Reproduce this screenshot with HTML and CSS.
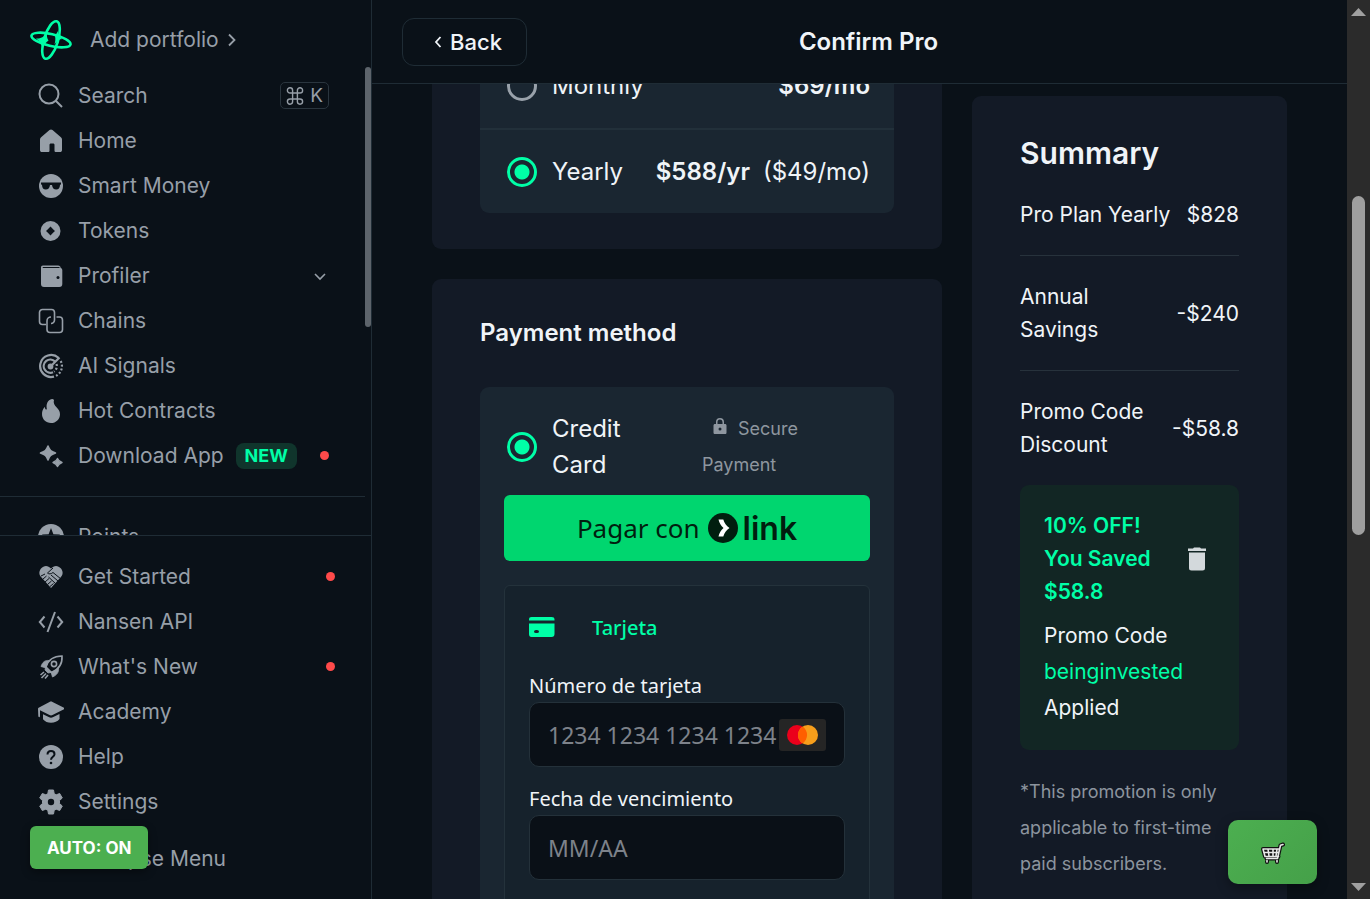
FILE: index.html
```
<!DOCTYPE html>
<html lang="en">
<head>
<meta charset="utf-8">
<title>Confirm Pro</title>
<link rel="stylesheet" href="styles.css">
</head>
<body>
<div class="app">
  <aside class="sidebar">
    <a class="brand" href="#">
      <svg class="brand-logo" viewBox="0 0 42 42" fill="none" stroke="currentColor" stroke-width="2.6">
        <ellipse cx="21" cy="21" rx="7" ry="19.500" transform="rotate(17 21 21)"/>
        <ellipse cx="21" cy="21" rx="20" ry="6" transform="rotate(13 21 21)"/>
        <path d="M6 19.500c4 .3 8-1 11-5.500-.3 3 0 5 1.500 7.500-3 2-5 5-6 9.500 0-5-2-8.500-6.500-11.500z" fill="currentColor" stroke="none"/>
        <path d="M25 17l3-5c-.3 4 .8 6 4.500 8-3 0-6 2-8 5.500.8-3 1.200-5.500.5-8.500z" fill="currentColor" stroke="none"/>
      </svg>
      <span>Add portfolio</span>
      <svg class="brand-chevron" viewBox="0 0 10 16" fill="none" stroke="currentColor" stroke-width="1.800"><path d="M2 2.500l5.500 5.500L2 13.500"/></svg>
    </a>
    <div class="menu">
      <nav class="menu-list">
        <a class="item" href="#">
          <svg class="icon" viewBox="0 0 26 26" fill="none" stroke="currentColor" stroke-width="2"><circle cx="11" cy="11" r="9.500"/><path d="M17.500 17.500l6.500 6.500"/></svg>
          <span>Search</span>
          <kbd class="shortcut"><svg viewBox="0 0 18 18" fill="none" stroke="currentColor" stroke-width="1.400"><path d="M6 6H4a2.600 2.600 0 1 1 2.600-2.600V14.600A2.600 2.600 0 1 1 4 12H14a2.600 2.600 0 1 1-2.600 2.600V3.400A2.600 2.600 0 1 1 14 6z"/></svg>K</kbd>
        </a>
        <a class="item" href="#">
          <svg class="icon" viewBox="0 0 26 26" fill="currentColor"><path d="M2 11.500c0-1 .4-1.700 1.100-2.300L11.500 2c.9-.8 2.100-.8 3 0l8.400 7.200c.7.600 1.100 1.300 1.100 2.300V22c0 1.400-.8 2-2 2h-4c-1 0-1.500-.500-1.500-1.500V17c0-1-.5-1.500-1.500-1.500h-2c-1 0-1.500.5-1.500 1.500v5.500c0 1-.5 1.500-1.500 1.500H4c-1.200 0-2-.6-2-2z"/></svg>
          <span>Home</span>
        </a>
        <a class="item" href="#">
          <svg class="icon" viewBox="0 0 26 26"><circle cx="13" cy="13" r="12" fill="currentColor"/><path class="cut-fill" d="M3 9.500h20v1.800l-1 .6c-.2 3-1.500 4.600-3.800 4.600-2.400 0-3.800-1.700-4.200-4.600h-2c-.4 2.900-1.800 4.600-4.200 4.600S4.200 14.900 4 11.900l-1-.6z"/></svg>
          <span>Smart Money</span>
        </a>
        <a class="item" href="#">
          <svg class="icon" viewBox="0 0 26 26"><circle cx="12.500" cy="13" r="10" fill="currentColor"/><path class="cut-fill" d="M12.500 8.500c1 1.300 3.200 3.500 4.500 4.500-1.300 1-3.500 3.200-4.500 4.500-1-1.300-3.200-3.500-4.500-4.500 1.300-1 3.500-3.200 4.500-4.500z"/></svg>
          <span>Tokens</span>
        </a>
        <a class="item" href="#">
          <svg class="icon" viewBox="0 0 26 26"><path d="M5 2.500h15c1.800 0 2.700 1 2.700 2.500 1 .3 1.600 1 1.600 2.200V21c0 2-1 3-3 3H6c-2 0-3-1-3-3V4.800c0-1.500.6-2.300 2-2.300z" fill="currentColor"/><path class="cut-fill" d="M4.500 3.900h16c.8 0 1.200.4 1.200 1H5z"/><circle class="cut-fill" cx="20" cy="14.500" r="1.500"/></svg>
          <span>Profiler</span>
          <svg class="item-chevron" viewBox="0 0 16 16" fill="none" stroke="currentColor" stroke-width="1.600"><path d="M2 6l5 5 5-5"/></svg>
        </a>
        <a class="item" href="#">
          <svg class="icon" viewBox="0 0 26 26" fill="none" stroke="currentColor" stroke-width="1.600"><path d="M8 16.500H4.500a3 3 0 0 1-3-3v-9a3 3 0 0 1 3-3h9a3 3 0 0 1 3 3v7.500a3.500 3.500 0 0 1-3.500 3.500"/><path d="M18.500 9h3a3 3 0 0 1 3 3v9.500a3 3 0 0 1-3 3H12a3 3 0 0 1-3-3V13a4 4 0 0 1 4-4"/></svg>
          <span>Chains</span>
        </a>
        <a class="item" href="#">
          <svg class="icon" viewBox="0 0 26 26" fill="none" stroke="currentColor" stroke-width="2.200"><path d="M20.500 4.800A11 11 0 1 0 16 23.600M17 8.500A6.600 6.600 0 1 0 15 19.200M21.500 4.500l-8.500 8.500"/><circle cx="12.500" cy="13.500" r="1.800" fill="currentColor"/><path d="M22.700 8a11 11 0 0 1-5 15M18.500 11a6.500 6.500 0 0 1-2.500 7.500" stroke-dasharray="2 1.800"/></svg>
          <span>AI Signals</span>
        </a>
        <a class="item" href="#">
          <svg class="icon" viewBox="0 0 26 26" fill="currentColor"><path d="M14 1c-4.500 1.200-6 5-5.200 9.700.1 1-.9 1.200-1.400.3-.4-.7-.6-1.400-.6-2.200C4.800 11 4 13.400 4 16c0 5.200 4 9 9 9s9-3.700 9-8.800c0-3.200-1.700-5-3.500-7C16.600 7.200 15 5 16 2c-.5-.6-1.200-1.100-2-1z"/></svg>
          <span>Hot Contracts</span>
        </a>
        <a class="item" href="#">
          <svg class="icon" viewBox="0 0 26 26" fill="currentColor" stroke="currentColor" stroke-linejoin="round"><path d="M10 3c1.800 4.500 2.700 5.300 7.500 7-4.800 1.700-5.700 2.500-7.500 7-1.800-4.500-2.700-5.300-7.500-7C7.300 8.300 8.200 7.500 10 3z" stroke-width="1.600"/><path d="M19.500 15.500c1 2.500 1.500 3 4.500 4-3 1-3.500 1.500-4.500 4-1-2.500-1.500-3-4.500-4 3-1 3.500-1.500 4.500-4z" stroke-width="1.400"/></svg>
          <span>Download App</span>
          <span class="tag">NEW</span>
          <i class="dot"></i>
        </a>
        <hr class="rule">
        <a class="item" href="#">
          <svg class="icon" viewBox="0 0 26 26"><circle cx="13" cy="13" r="13" fill="currentColor"/><path class="cut-fill" d="M13 4l2.400 6.200 6.600.4-5 4.200 1.600 6.400-5.600-3.500-5.600 3.500L9 14.800l-5-4.200 6.600-.4z"/></svg>
          <span>Points</span>
        </a>
      </nav>
      <div class="menu-track"><div class="menu-thumb"></div></div>
    </div>
    <nav class="menu-bottom">
      <a class="item" href="#">
        <svg class="icon" viewBox="0 0 26 26"><path d="M13 4.500c3-3.500 7-3.500 10 0 2.500 3.300 2 6.500-.5 9L13 24l-9.500-10.500C1 11 .5 7.800 3 4.500c3-3.500 7-3.500 10 0z" fill="currentColor"/><path class="cut-line" d="M15 4l-5.500 5c1.500 1.500 3.500 1 5.500-.5l8 6.500M13 11l7 6M10.500 13l7 6.500M3 12l4-2M4.500 15.500l4-3.500M7 18l4-3.500M9.500 20.500l4-3.500M12 22.500l3.500-3"/></svg>
        <span>Get Started</span><i class="dot"></i>
      </a>
      <a class="item" href="#">
        <svg class="icon" viewBox="0 0 26 26" fill="none" stroke="currentColor" stroke-width="2"><path d="M6.500 7.500L1.800 13l4.700 5.500M19.500 7.500l4.700 5.500-4.700 5.500M17 3L9.500 23"/></svg>
        <span>Nansen API</span>
      </a>
      <a class="item" href="#">
        <svg class="icon" viewBox="0 0 26 26" fill="none" stroke="currentColor" stroke-width="1.600"><path d="M8 13c2-6.500 6.500-11 16-11 .6 8-3.500 13.500-10.500 16.500z"/><circle cx="16" cy="10" r="2.600"/><path d="M8.500 11.500L11 6.500C7 6 4.500 8 3 12.500l5 1.500zM14.500 18l6-4c.5 4-1.500 7-6 9l-1.500-5zM7.500 13.500l5.500 5-3 .5-3-3z" fill="currentColor" stroke-width=".8"/><path d="M6 18l-3.500 3M8 19.500l-4.500 4.500M10 21l-3 3.500"/></svg>
        <span>What's New</span><i class="dot"></i>
      </a>
      <a class="item" href="#">
        <svg class="icon" viewBox="0 0 26 26" fill="currentColor"><path d="M13 2.500c.6 0 1 .1 1.500.4L26 8.700c.8.400.8 1.200 0 1.600l-11.500 5.800c-1 .5-2 .5-3 0L2 11.300V17c0 .8-.3 1.200-.8 1.200S.3 17.800.3 17L0 9.700c0-.5.200-.8.600-1l10.900-5.800c.5-.3.900-.4 1.500-.4z"/><path d="M5 15.200l5.700 2.900c1.600.8 3 .8 4.600 0l6.200-3.100v5c-2 2.600-5 3.800-8.500 3.800-3.200 0-6-1.200-8-3.600z"/></svg>
        <span>Academy</span>
      </a>
      <a class="item" href="#">
        <svg class="icon" viewBox="0 0 26 26"><circle cx="13" cy="13" r="12" fill="currentColor"/><path class="cut-line wide" d="M9.500 10.500c0-2.200 1.500-3.500 3.500-3.500s3.500 1.300 3.500 3.200c0 2.600-3.500 2.600-3.500 5.600"/><circle class="cut-fill" cx="13" cy="19" r="1.300"/></svg>
        <span>Help</span>
      </a>
      <a class="item" href="#">
        <svg class="icon" viewBox="0 0 26 26"><path fill="currentColor" stroke="currentColor" stroke-linejoin="round" d="M10.500 1h5l.7 3.700 2 1.100 3.500-1.300L24.300 9l-2.800 2.500v3l2.800 2.500-2.600 4.500-3.500-1.300-2 1.100-.7 3.700h-5l-.7-3.700-2-1.100-3.500 1.300L1.700 17l2.800-2.500v-3L1.700 9l2.600-4.500 3.500 1.300 2-1.100z"/><circle class="cut-fill" cx="13" cy="13" r="3.200"/></svg>
        <span>Settings</span>
      </a>
      <button class="item collapse" type="button">
        <svg class="icon" viewBox="0 0 26 26" fill="none" stroke="currentColor" stroke-width="2"><path d="M13 6l-7 7 7 7M20 6l-7 7 7 7"/></svg>
        <span>Collapse Menu</span>
      </button>
    </nav>
    <button class="auto" type="button">AUTO: ON</button>
  </aside>

  <main class="main">
    <header class="topbar">
      <button class="back" type="button"><svg viewBox="0 0 8 12" fill="none" stroke="currentColor" stroke-width="1.800"><path d="M6.500 1L2 6l4.500 5"/></svg>Back</button>
      <h1 class="title">Confirm Pro</h1>
    </header>
    <div class="content">
      <div class="column">
        <section class="card plan">
          <div class="options">
            <label class="option"><input class="radio" type="radio" name="plan"><span>Monthly</span><span class="price"><b>$69/mo</b></span></label>
            <label class="option"><input class="radio" type="radio" name="plan" checked><span>Yearly</span><span class="price"><b>$588/yr</b><span>($49/mo)</span></span></label>
          </div>
        </section>
        <section class="card payment">
          <h2 class="card-title">Payment method</h2>
          <div class="method">
            <label class="method-head">
              <input class="radio" type="radio" name="method" checked>
              <span class="method-name">Credit Card</span>
              <span class="secure"><svg viewBox="0 0 14 18" fill="currentColor"><path d="M3 7V5a4 4 0 0 1 8 0v2h1c1 0 1.500.6 1.500 1.500v7c0 1-.5 1.500-1.500 1.500H2c-1 0-1.500-.5-1.500-1.500v-7C.5 7.600 1 7 2 7zm1.500 0h5V5a2.500 2.500 0 0 0-5 0zM7 10.500a1.500 1.500 0 1 0 0 3 1.500 1.500 0 0 0 0-3z" fill-rule="evenodd"/></svg>Secure Payment</span>
            </label>
            <button class="link-pay" type="button">
              <span>Pagar con</span>
              <svg viewBox="0 0 30 30"><circle cx="15" cy="15" r="15" fill="#011e0f"/><path d="M10.500 6.500h4.800c1 3.500 3 6.300 6.200 8.500-3.200 2.200-5.200 5-6.200 8.500h-4.800c.8-3.500 2.500-6.200 5-8.500-2.500-2.300-4.200-5-5-8.500z" fill="#fff"/></svg>
              <strong>link</strong>
            </button>
            <div class="card-form">
              <div class="tab">
                <svg viewBox="0 0 26 20" fill="currentColor"><path d="M2.500 0h20c2 0 3 .8 3 2.500v1H0v-1C0 .8.800 0 2.500 0zM0 6.500h25.500V17c0 2-1 3-3 3h-20C.8 20 0 19 0 17zm7 6.500a2 1.500 0 1 0 0 3h1a2 1.500 0 1 0 0-3z"/></svg>
                <span>Tarjeta</span>
              </div>
              <div class="field">
                <label for="number">Número de tarjeta</label>
                <div class="box">
                  <input id="number" type="text" placeholder="1234 1234 1234 1234">
                  <svg viewBox="0 0 47 32"><rect width="47" height="32" rx="3" fill="#252525"/><circle cx="18" cy="16" r="10" fill="#eb001b"/><circle cx="29" cy="16" r="10" fill="#f79e1b"/><path d="M23.500 7.600a10 10 0 0 1 0 16.800 10 10 0 0 1 0-16.800z" fill="#ff5f00"/></svg>
                </div>
              </div>
              <div class="field">
                <label for="expiry">Fecha de vencimiento</label>
                <div class="box"><input id="expiry" type="text" placeholder="MM/AA"></div>
              </div>
            </div>
          </div>
        </section>
      </div>
      <section class="card summary">
        <h2 class="summary-title">Summary</h2>
        <div class="line"><span>Pro Plan Yearly</span><span>$828</span></div>
        <div class="line"><span>Annual Savings</span><span>-$240</span></div>
        <div class="line"><span>Promo Code Discount</span><span>-$58.8</span></div>
        <div class="promo">
          <div class="promo-head">
            <strong>10% OFF! You Saved $58.8</strong>
            <button class="remove" type="button" aria-label="Remove promo code"><svg viewBox="0 0 18 24" fill="currentColor"><path d="M0 1.500h5L6 .5h6l1 1h5V4H0zM1 5.500h16V21c0 1.700-.8 2.500-2.500 2.500h-11C1.800 23.500 1 22.700 1 21z"/></svg></button>
          </div>
          <p>Promo Code <em>beinginvested</em> Applied</p>
        </div>
        <p class="note">*This promotion is only applicable to first-time paid subscribers.</p>
      </section>
    </div>
    <button class="cart" type="button" aria-label="Cart">
      <svg viewBox="0 0 24 24" fill="none" stroke-linejoin="round" stroke-linecap="round"><path d="M22 2.500l-2.500.8-3 13.200H5.500M18.500 7H2l2 7.500h13.500M7 7l1 7M12 7v7M2.800 10.500h15M6 17v3M16 17v3" stroke="#111" stroke-width="4"/><path d="M22 2.500l-2.500.8-3 13.200H5.500M18.500 7H2l2 7.500h13.500M7 7l1 7M12 7v7M16 7l-1 7M2.800 10.500h15M6 18.500v1.500M16 18.500v1.500" stroke="#e8e8e8" stroke-width="1.600"/></svg>
    </button>
  </main>

  <div class="page-track">
    <svg viewBox="0 0 15 8" fill="currentColor"><path d="M7.500 0L15 8H0z"/></svg>
    <div class="page-thumb"></div>
    <svg class="down" viewBox="0 0 15 8" fill="currentColor"><path d="M0 0h15L7.500 8z"/></svg>
  </div>
</div>
</body>
</html>
```
FILE: styles.css
```
:root {
  --bg: #0a1118;
  --card: #131a26;
  --panel: #1a2631;
  --border: #1f2c35;
  --muted: #979fa8;
  --text: #f0f4f8;
  --accent: #00ffa7;
}

* { box-sizing: border-box; margin: 0; }

body {
  background: var(--bg);
  color: var(--text);
  font-family: Inter, "Liberation Sans", sans-serif;
  font-size: 21px;
}

a { color: inherit; text-decoration: none; }
button { font: inherit; color: inherit; border: 0; background: none; padding: 0; cursor: pointer; }
svg { flex: none; }

.app { display: flex; height: 100vh; overflow: hidden; }

/* Sidebar */
.sidebar {
  position: relative;
  flex: 0 0 372px;
  display: flex;
  flex-direction: column;
  border-right: 1px solid var(--border);
  color: var(--muted);
}
.brand { display: flex; align-items: center; height: 67px; padding: 12px 30px 0; flex: none; }
.brand-logo { width: 42px; height: 42px; margin-right: 18px; color: var(--accent); }
.brand-chevron { width: 10px; height: 16px; margin-left: 8px; }

.menu { display: flex; flex: 1; min-height: 0; overflow: hidden; }
.menu-list { flex: 1; padding-top: 6px; }
.menu-track { width: 6px; }
.menu-thumb { height: 260px; border-radius: 3px; background: #5d646b; }

.item { display: flex; align-items: center; width: 100%; height: 45px; padding: 0 36px 0 38px; }
.icon { width: 26px; height: 26px; margin-right: 14px; }
.cut-fill { fill: var(--bg); }
.cut-line { fill: none; stroke: var(--bg); stroke-width: 1; }
.cut-line.wide { stroke-width: 2; }
.shortcut {
  display: flex;
  align-items: center;
  gap: 6px;
  height: 27px;
  margin-left: auto;
  padding: 0 5px;
  border: 1px solid #2a353e;
  border-radius: 5px;
  font-family: inherit;
  font-size: 19px;
}
.shortcut svg { width: 18px; height: 18px; }
.item-chevron { width: 16px; height: 16px; margin-left: auto; }
.tag {
  margin-left: 12px;
  padding: 0 9px;
  border-radius: 8px;
  background: #10352c;
  color: var(--accent);
  font-size: 18px;
  font-weight: 700;
  line-height: 26px;
}
.dot { width: 9px; height: 9px; margin-left: auto; border-radius: 50%; background: #ff4a4a; }
.rule { height: 1px; margin: 18px 0 17px; border: 0; background: var(--border); }
.menu-bottom { flex: none; padding: 18px 0; border-top: 1px solid var(--border); }
.collapse { margin-top: 12px; }

.auto {
  position: absolute;
  left: 30px;
  bottom: 30px;
  height: 43px;
  padding: 0 17px;
  border-radius: 6px;
  background: #4caf50;
  box-shadow: 0 3px 8px rgba(0, 0, 0, .4);
  color: #fff;
  font-size: 17px;
  font-weight: 700;
}

/* Main area */
.main { position: relative; flex: 1; min-width: 0; display: flex; flex-direction: column; }
.topbar {
  display: grid;
  grid-template-columns: 1fr auto 1fr;
  align-items: center;
  flex: none;
  height: 84px;
  padding: 0 12px 0 30px;
  border-bottom: 1px solid var(--border);
}
.back {
  justify-self: start;
  display: flex;
  align-items: center;
  gap: 8px;
  height: 48px;
  padding: 0 24px 0 31px;
  border: 1px solid var(--border);
  border-radius: 12px;
  font-size: 22px;
  font-weight: 500;
}
.back svg { width: 8px; height: 12px; }
.title { font-size: 24px; font-weight: 600; }

.content {
  display: grid;
  grid-template-columns: minmax(0, 34fr) minmax(0, 21fr);
  gap: 30px;
  flex: 1;
  min-height: 0;
  overflow: hidden;
  padding: 0 60px;
}
.card { border-radius: 9px; background: var(--card); }
.column { display: flex; flex-direction: column; gap: 30px; margin-top: -89px; }

.plan { padding: 48px 48px 36px; }
.options { overflow: hidden; border-radius: 9px; background: var(--panel); }
.option { display: flex; align-items: center; height: 85px; padding: 0 24px 0 27px; font-size: 24px; }
.option + .option { border-top: 2px solid #22303a; }
.price { display: flex; gap: 13px; margin-left: auto; }
.price b { font-weight: 600; }
.radio {
  appearance: none;
  flex: none;
  width: 30px;
  height: 30px;
  margin: 0 15px 0 0;
  border: 3px solid #99a1aa;
  border-radius: 50%;
}
.radio:checked { border-color: var(--accent); background: radial-gradient(circle, var(--accent) 7px, transparent 8px); }

.payment { padding: 36px 48px; }
.card-title { margin-bottom: 36px; font-size: 24px; font-weight: 600; line-height: 36px; }
.method { padding: 24px; border-radius: 9px; background: var(--panel); }
.method-head { display: flex; align-items: center; padding-left: 3px; margin-bottom: 12px; font-size: 24px; line-height: 36px; }
.method-name { width: 90px; }
.secure { width: 168px; margin-left: auto; color: #8e969f; font-size: 18px; }
.secure svg { width: 14px; height: 18px; margin: 0 11px; }
.link-pay {
  display: flex;
  align-items: center;
  justify-content: center;
  gap: 8px;
  width: 100%;
  height: 66px;
  border-radius: 6px;
  background: #00d66f;
  color: #011e0f;
  font-family: "Noto Sans", "Open Sans", sans-serif;
  font-size: 26px;
}
.link-pay svg { width: 30px; height: 30px; }
.link-pay strong { margin-left: -3px; font-family: Inter, sans-serif; font-size: 32px; font-weight: 600; }

.card-form {
  margin-top: 24px;
  padding: 24px;
  border: 1px solid #24323b;
  border-radius: 6px;
  background: #16222c;
  font-family: "Noto Sans", "Open Sans", sans-serif;
}
.tab { display: flex; align-items: center; gap: 37px; height: 34px; margin-bottom: 28px; color: var(--accent); font-size: 20px; font-weight: 500; }
.tab svg { width: 26px; height: 20px; }
.field { margin-bottom: 18px; }
.field label { display: block; height: 30px; font-size: 20px; line-height: 27px; }
.box {
  display: flex;
  align-items: center;
  height: 65px;
  padding: 0 18px;
  border: 1px solid #24313a;
  border-radius: 10px;
  background: #0a1017;
}
.box input { flex: 1; min-width: 0; padding: 0; border: 0; outline: 0; background: none; color: var(--text); font: inherit; font-size: 23px; }
.box input::placeholder { color: #7d828a; opacity: 1; }
.box svg { width: 47px; height: 32px; }

/* Order summary */
.summary { margin-top: 12px; padding: 36px 48px; }
.summary-title { margin-bottom: 24px; font-size: 30px; font-weight: 600; line-height: 42px; }
.line { display: flex; align-items: center; justify-content: space-between; gap: 12px; padding-bottom: 24px; line-height: 33px; }
.line + .line { padding-top: 24px; border-top: 1px solid #27323c; }
.promo { padding: 24px; border-radius: 9px; background: #122624; line-height: 36px; }
.promo-head { display: flex; align-items: center; justify-content: space-between; margin-bottom: 10px; color: var(--accent); line-height: 33px; }
.promo-head strong { font-weight: 600; }
.promo em { color: var(--accent); font-style: normal; }
.remove { flex: none; display: flex; justify-content: center; width: 36px; color: #d3d9dc; }
.remove svg { width: 18px; height: 24px; }
.note { margin-top: 24px; color: #8c949e; font-size: 18px; line-height: 36px; }

.cart {
  position: absolute;
  right: 30px;
  bottom: 15px;
  display: flex;
  align-items: center;
  justify-content: center;
  width: 89px;
  height: 64px;
  padding-top: 4px;
  border-radius: 10px;
  background: linear-gradient(135deg, #4caf50, #45a049);
  box-shadow: 0 4px 12px rgba(0, 0, 0, .35);
}
.cart svg { width: 24px; height: 24px; }

/* Page scrollbar */
.page-track { flex: 0 0 23px; display: flex; flex-direction: column; align-items: center; padding: 8px 4px; background: #2b2b2b; color: #a0a0a0; }
.page-track svg { width: 15px; height: 8px; }
.page-thumb { width: 13px; height: 339px; margin-top: 180px; border-radius: 7px; background: #9f9f9f; }
.page-track .down { margin-top: auto; }
```
